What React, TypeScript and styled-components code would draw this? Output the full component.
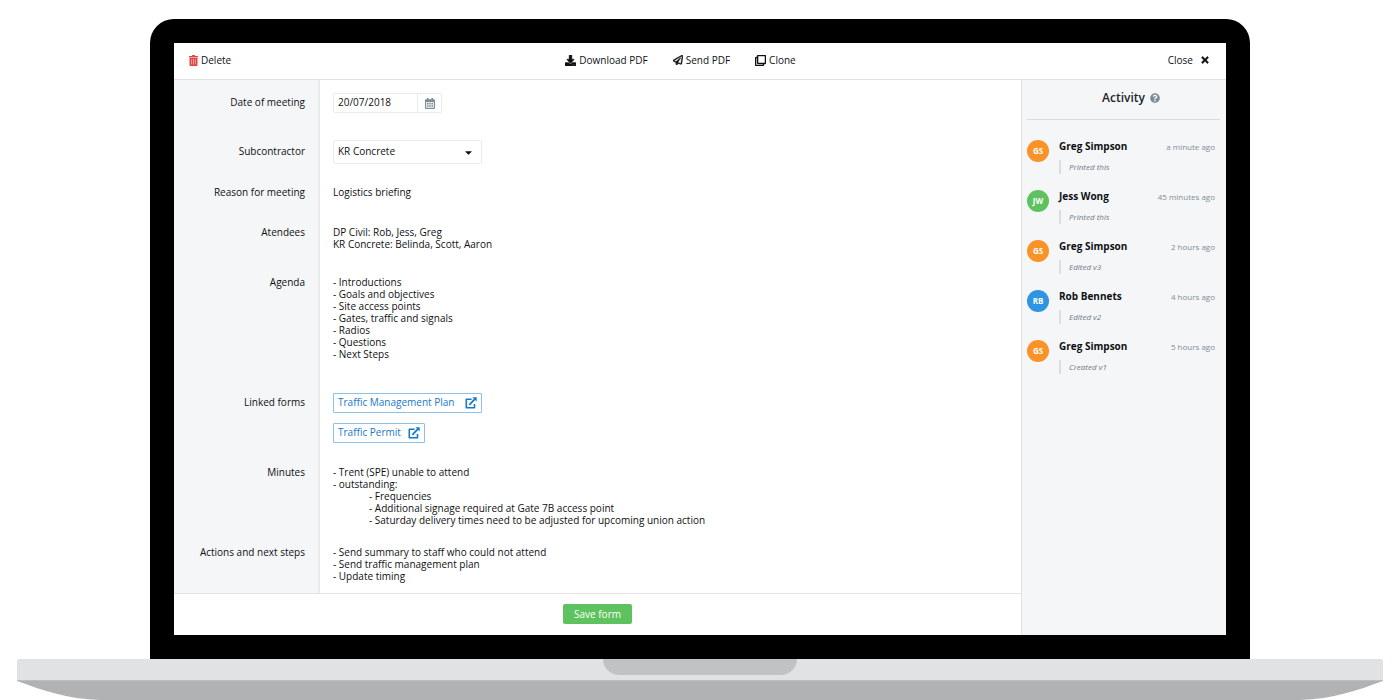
import React from "react";
import styled, { createGlobalStyle } from "styled-components";
import {
  FaCaretDown,
  FaDownload,
  FaQuestionCircle,
  FaRegClone,
  FaRegPaperPlane,
  FaTimes,
} from "react-icons/fa";

const ink = "#0e1013";
const muted = "#7f8d97";
const panel = "#f5f6f8";
const line = "#e1e3e5";
const blue = "#1678cc";

const GlobalStyle = createGlobalStyle`
  *, *::before, *::after { box-sizing: border-box; }
  body {
    margin: 0;
    background: #fff;
    color: ${ink};
    font: 10px/12px "Open Sans", "Noto Sans", sans-serif;
  }
  button, input, select { font: inherit; color: inherit; }
`;

const Page = styled.div`
  padding: 19px 17px 0;
`;

const Lid = styled.div`
  margin: 0 133px;
  padding: 24px;
  background: #000;
  border-radius: 24px 24px 0 0;
`;

const Screen = styled.div`
  background: #fff;
`;

const Toolbar = styled.header`
  display: grid;
  grid-template-columns: 1fr auto 1fr;
  align-items: center;
  height: 37px;
  padding: 0 16px 2px 15px;
  border-bottom: 1px solid ${line};
`;

const ToolGroup = styled.div<{ $end?: boolean }>`
  display: flex;
  justify-content: ${(p) => (p.$end ? "flex-end" : "flex-start")};
`;

const CenterTools = styled(ToolGroup)`
  gap: 25px;
  padding-right: 38px;
`;

const ToolButton = styled.button<{ $gap?: number; $icon?: string }>`
  display: flex;
  align-items: center;
  gap: ${(p) => p.$gap ?? 3}px;
  padding: 0;
  border: 0;
  background: none;
  line-height: 12px;
  svg {
    color: ${(p) => p.$icon ?? "inherit"};
    stroke-width: 20px;
  }
`;

const Content = styled.div`
  display: grid;
  grid-template-columns: minmax(0, 1fr) 205px;
`;

const Row = styled.div<{ $after: number; $line?: number }>`
  display: grid;
  grid-template-columns: 146px 1fr;
  --after: ${(p) => p.$after}px;
  --line: ${(p) => p.$line ?? 12}px;
`;

const Label = styled.label`
  padding: 13px 13px var(--after) 0;
  background: ${panel};
  border-right: 2px solid #e9eaec;
  text-align: right;
  line-height: var(--line);
`;

const Value = styled.div`
  padding: 13px 13px var(--after);
`;

const Notes = styled.div`
  white-space: pre-wrap;
  tab-size: 36px;
`;

const DateBox = styled.div`
  display: flex;
  width: 109px;
  height: 20px;
  border: 1px solid #e9ebec;
  border-radius: 2px;
`;

const DateInput = styled.input`
  flex: 1;
  min-width: 0;
  padding: 0 4px 2px;
  border: 0;
  background: none;
`;

const DateButton = styled.button`
  display: grid;
  place-items: center;
  width: 24px;
  padding: 0;
  border: 0;
  border-left: 1px solid #e9ebec;
  background: none;
  color: ${muted};
`;

const SelectBox = styled.div`
  display: grid;
  grid-template-columns: 1fr;
  align-items: center;
  width: 149px;
  > * { grid-area: 1 / 1; }
  svg { justify-self: end; margin-right: 8px; pointer-events: none; }
`;

const Select = styled.select`
  appearance: none;
  height: 24px;
  padding: 0 4px 2px;
  border: 1px solid #e9ebec;
  border-radius: 2px;
  background: #fff;
`;

const LinkList = styled.div`
  display: flex;
  flex-direction: column;
  align-items: flex-start;
  gap: 10px;
`;

const FormLink = styled.a<{ $wide?: boolean }>`
  display: flex;
  align-items: center;
  gap: ${(p) => (p.$wide ? 11 : 7)}px;
  height: 20px;
  padding: 0 4px;
  border: 1px solid #8fc0e8;
  border-radius: 1px;
  color: ${blue};
  text-decoration: none;
`;

const LinkText = styled.span`
  padding-bottom: 2px;
`;

const Footer = styled.footer`
  display: flex;
  justify-content: center;
  padding: 10px 0 11px;
  border-top: 1px solid ${line};
`;

const SaveButton = styled.button`
  height: 20px;
  padding: 0 11px 1px;
  border: 0;
  border-radius: 2px;
  background: #5ec35f;
  color: #fff;
`;

const Sidebar = styled.aside`
  padding: 0 6px 0 5px;
  background: ${panel};
  border-left: 1px solid #dfe1e3;
`;

const SidebarTitle = styled.h2`
  display: flex;
  align-items: center;
  justify-content: center;
  gap: 5px;
  height: 40px;
  margin: 0 0 20px;
  padding: 0 0 4px 15px;
  border-bottom: 1px solid #d9dcde;
  color: #212529;
  font-size: 12px;
  font-weight: 600;
  svg { color: ${muted}; }
`;

const Feed = styled.ul`
  margin: 0;
  padding: 0;
  list-style: none;
`;

const Entry = styled.li`
  display: grid;
  grid-template-columns: 22px 1fr;
  gap: 10px;
  height: 50px;
`;

const Avatar = styled.span<{ $color: string }>`
  display: grid;
  place-items: center;
  width: 22px;
  height: 22px;
  border-radius: 50%;
  background: ${(p) => p.$color};
  color: #fff;
  font-size: 8px;
  font-weight: 700;
`;

const EntryHead = styled.div`
  display: flex;
  justify-content: space-between;
  padding-right: 5px;
`;

const Name = styled.span`
  font-weight: 700;
`;

const Time = styled.time`
  color: ${muted};
  font-size: 8px;
  line-height: 14px;
`;

const Action = styled.div`
  margin-top: 6px;
  padding-left: 8px;
  border-left: 2px solid #dcdfdf;
  color: #6c7a85;
  font-size: 8px;
  font-style: italic;
  line-height: 14px;
`;

const Deck = styled.div`
  display: flex;
  justify-content: center;
  height: 22px;
  background: #e1e2e4;
  border-bottom: 1px solid #bcbdbf;
  border-radius: 2px 2px 0 0;
`;

const Notch = styled.div`
  width: 194px;
  height: 16px;
  border-radius: 0 0 16px 16px;
  background: #c1c2c4;
`;

const Underside = styled.div`
  display: flex;
  height: 19px;
  svg { flex: none; fill: #b1b2b4; }
  &::before { content: ""; order: 1; flex: 1; background: #b1b2b4; }
  svg:last-child { order: 2; }
`;

const TrashIcon = () => (
  <svg width="9" height="11" viewBox="0 0 9 11" aria-hidden="true">
    <path fill="currentColor" d="M0 1h2.8l.5-1h2.4l.5 1H9v1.2H0zM.5 2.8h8V10a1 1 0 0 1-1 1h-6a1 1 0 0 1-1-1z" />
    <path stroke="#f3b3b1" strokeWidth=".8" d="M2.6 4.2v5.2M4.5 4.2v5.2M6.4 4.2v5.2" />
  </svg>
);

const CalendarIcon = () => (
  <svg width="10" height="11" viewBox="0 0 10 11" aria-hidden="true">
    <path
      fill="currentColor"
      fillRule="evenodd"
      d="M2 0h1.6v1.2h2.8V0H8v1.2h1a1 1 0 0 1 1 1V10a1 1 0 0 1-1 1H1a1 1 0 0 1-1-1V2.200a1 1 0 0 1 1-1h1zM1.200 4v5.800h7.600V4z"
    />
    <path fill="currentColor" d="M2 4.800h1.600v1.600H2zM4.200 4.800h1.600v1.600H4.200zM6.400 4.800H8v1.600H6.400zM2 7.200h1.600v1.600H2zM4.200 7.200h1.600v1.600H4.200zM6.400 7.200H8v1.600H6.400z" />
  </svg>
);

const ExternalIcon = () => (
  <svg width="12" height="12" viewBox="0 0 12 12" fill="none" stroke="currentColor" aria-hidden="true">
    <path strokeWidth="1.600" strokeLinejoin="round" d="M6.600 2.300H1.300v8.400h8.200V7" />
    <path strokeWidth="1.800" d="M4.300 7.800 9.800 2.200" />
    <path fill="currentColor" stroke="none" d="M7.400.3h4.300v4.300z" />
  </svg>
);

const agenda = `- Introductions
- Goals and objectives
- Site access points
- Gates, traffic and signals
- Radios
- Questions
- Next Steps`;

const minutes = `- Trent (SPE) unable to attend
- outstanding:
\t- Frequencies
\t- Additional signage required at Gate 7B access point
\t- Saturday delivery times need to be adjusted for upcoming union action`;

const actions = `- Send summary to staff who could not attend
- Send traffic management plan
- Update timing`;

const people = {
  greg: { name: "Greg Simpson", initials: "GS", color: "#f99227" },
  jess: { name: "Jess Wong", initials: "JW", color: "#5ec35f" },
  rob: { name: "Rob Bennets", initials: "RB", color: "#2e95e3" },
};

const feed = [
  { who: people.greg, when: "a minute ago", what: "Printed this" },
  { who: people.jess, when: "45 minutes ago", what: "Printed this" },
  { who: people.greg, when: "2 hours ago", what: "Edited v3" },
  { who: people.rob, when: "4 hours ago", what: "Edited v2" },
  { who: people.greg, when: "5 hours ago", what: "Created v1" },
];

export default function App() {
  return (
    <Page>
      <GlobalStyle />
      <Lid>
        <Screen>
          <Toolbar>
            <ToolGroup>
              <ToolButton $icon="#dc4644"><TrashIcon />Delete</ToolButton>
            </ToolGroup>
            <CenterTools>
              <ToolButton><FaDownload size={11} />Download PDF</ToolButton>
              <ToolButton><FaRegPaperPlane size={10} />Send PDF</ToolButton>
              <ToolButton><FaRegClone size={11} />Clone</ToolButton>
            </CenterTools>
            <ToolGroup $end>
              <ToolButton $gap={7}>Close<FaTimes size={10} strokeWidth={40} /></ToolButton>
            </ToolGroup>
          </Toolbar>
          <Content>
            <main>
              <Row $after={14} $line={18}>
                <Label htmlFor="date">Date of meeting</Label>
                <Value>
                  <DateBox>
                    <DateInput id="date" defaultValue="20/07/2018" />
                    <DateButton aria-label="Open calendar"><CalendarIcon /></DateButton>
                  </DateBox>
                </Value>
              </Row>
              <Row $after={9} $line={22}>
                <Label htmlFor="subcontractor">Subcontractor</Label>
                <Value>
                  <SelectBox>
                    <Select id="subcontractor"><option>KR Concrete</option></Select>
                    <FaCaretDown size={11} />
                  </SelectBox>
                </Value>
              </Row>
              <Row $after={15}>
                <Label as="div">Reason for meeting</Label>
                <Value>Logistics briefing</Value>
              </Row>
              <Row $after={13}>
                <Label as="div">Atendees</Label>
                <Value><Notes>{"DP Civil: Rob, Jess, Greg\nKR Concrete: Belinda, Scott, Aaron"}</Notes></Value>
              </Row>
              <Row $after={20}>
                <Label as="div">Agenda</Label>
                <Value><Notes>{agenda}</Notes></Value>
              </Row>
              <Row $after={10} $line={18}>
                <Label as="div">Linked forms</Label>
                <Value>
                  <LinkList>
                    <FormLink href="#plan" $wide><LinkText>Traffic Management Plan</LinkText><ExternalIcon /></FormLink>
                    <FormLink href="#permit"><LinkText>Traffic Permit</LinkText><ExternalIcon /></FormLink>
                  </LinkList>
                </Value>
              </Row>
              <Row $after={7}>
                <Label as="div">Minutes</Label>
                <Value><Notes>{minutes}</Notes></Value>
              </Row>
              <Row $after={11}>
                <Label as="div">Actions and next steps</Label>
                <Value><Notes>{actions}</Notes></Value>
              </Row>
              <Footer><SaveButton>Save form</SaveButton></Footer>
            </main>
            <Sidebar>
              <SidebarTitle>Activity<FaQuestionCircle size={10} /></SidebarTitle>
              <Feed>
                {feed.map((item, i) => (
                  <Entry key={i}>
                    <Avatar $color={item.who.color}>{item.who.initials}</Avatar>
                    <div>
                      <EntryHead>
                        <Name>{item.who.name}</Name>
                        <Time>{item.when}</Time>
                      </EntryHead>
                      <Action>{item.what}</Action>
                    </div>
                  </Entry>
                ))}
              </Feed>
            </Sidebar>
          </Content>
        </Screen>
      </Lid>
      <Deck><Notch /></Deck>
      <Underside>
        <svg width="83" height="19" viewBox="0 0 83 19"><path d="M0 0H83V19C50 18 25 9 0 0Z" /></svg>
        <svg width="83" height="19" viewBox="0 0 83 19"><path d="M83 0H0V19C33 18 58 9 83 0Z" /></svg>
      </Underside>
    </Page>
  );
}
